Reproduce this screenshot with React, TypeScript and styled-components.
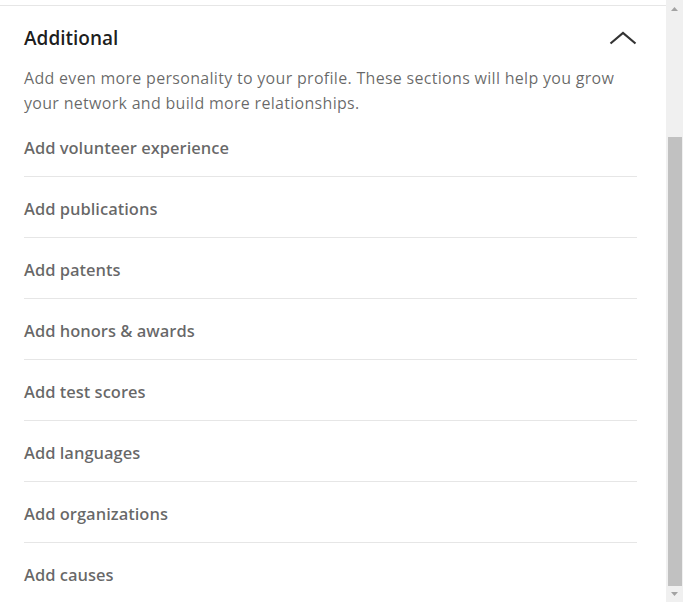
import { createGlobalStyle } from 'styled-components'
import styled from 'styled-components'

const GlobalStyle = createGlobalStyle`
  html, body {
    margin: 0;
    padding: 0;
    background: #ffffff;
    overflow: hidden;
  }
  body {
    font-family: "Open Sans", "Noto Sans", "Liberation Sans", sans-serif;
  }
`

const StyledPage = styled.div`
  display: flex;
  height: 602px;
  width: 683px;
  overflow: hidden;
`

const StyledContent = styled.div`
  flex: 1;
  display: flex;
  flex-direction: column;
  padding-top: 5px;
  min-width: 0;
`

const StyledSection = styled.section`
  border-top: 1px solid #e6e6e6;
  padding: 18px 29px 0 24px;
`

const StyledHeader = styled.div`
  display: flex;
  align-items: center;
  justify-content: space-between;
  height: 28px;
  margin-bottom: 14px;
`

const StyledTitle = styled.h2`
  margin: 0;
  font-size: 19px;
  font-weight: 600;
  line-height: 28px;
  color: rgba(0, 0, 0, 0.9);
`

const StyledToggle = styled.button`
  display: flex;
  align-items: center;
  justify-content: center;
  width: 32px;
  height: 28px;
  margin-right: -2px;
  padding: 0;
  border: none;
  background: none;
  cursor: pointer;
`

const StyledDescription = styled.p`
  margin: 0;
  max-width: 600px;
  font-size: 16px;
  letter-spacing: 0.3px;
  line-height: 25px;
  color: rgba(0, 0, 0, 0.6);
`

const StyledList = styled.ul`
  list-style: none;
  margin: 0;
  padding: 0;
`

const StyledItem = styled.li<{ $last?: boolean }>`
  display: flex;
  align-items: center;
  height: 61px;
  box-sizing: border-box;
  padding-top: 2px;
  border-bottom: ${(props) => (props.$last ? 'none' : '1px solid #e6e6e6')};
  font-size: 16.5px;
  font-weight: 600;
  color: rgba(0, 0, 0, 0.6);
  cursor: pointer;
`

const StyledRail = styled.div`
  width: 17px;
  flex: none;
  display: flex;
  flex-direction: column;
  background: #f0f0f0;
`

const StyledArrow = styled.div`
  height: 17px;
  flex: none;
  display: flex;
  align-items: center;
  justify-content: center;
`

const StyledTrack = styled.div`
  flex: 1;
  display: flex;
  flex-direction: column;
  padding: 0 1px 0 2px;
`

const StyledThumb = styled.div<{ $size: number }>`
  margin-top: auto;
  height: ${(props) => props.$size}px;
  background: #c1c1c1;
  margin-bottom: -1px;
`

const items = [
  'Add volunteer experience',
  'Add publications',
  'Add patents',
  'Add honors & awards',
  'Add test scores',
  'Add languages',
  'Add organizations',
  'Add causes',
]

function ChevronUp() {
  return (
    <svg width="28" height="14" viewBox="0 0 28 14" fill="none">
      <path d="M1.5 12.5 L14 2 L26.5 12.5" stroke="#333333" strokeWidth="2.2" />
    </svg>
  )
}

function Scrollbar() {
  return (
    <StyledRail>
      <StyledArrow>
        <svg width="7" height="4" viewBox="0 0 7 4">
          <path d="M0 4 L3.5 0 L7 4 Z" fill="#a3a3a3" />
        </svg>
      </StyledArrow>
      <StyledTrack>
        <StyledThumb $size={449} />
      </StyledTrack>
      <StyledArrow>
        <svg width="7" height="4" viewBox="0 0 7 4">
          <path d="M0 0 L7 0 L3.5 4 Z" fill="#a3a3a3" />
        </svg>
      </StyledArrow>
    </StyledRail>
  )
}

export default function App() {
  return (
    <>
      <GlobalStyle />
      <StyledPage>
        <StyledContent>
          <StyledSection>
            <StyledHeader>
              <StyledTitle>Additional</StyledTitle>
              <StyledToggle aria-label="Collapse">
                <ChevronUp />
              </StyledToggle>
            </StyledHeader>
            <StyledDescription>
              Add even more personality to your profile. These sections will help you grow
              your network and build more relationships.
            </StyledDescription>
            <StyledList>
              {items.map((item, i) => (
                <StyledItem key={item} $last={i === items.length - 1}>
                  {item}
                </StyledItem>
              ))}
            </StyledList>
          </StyledSection>
        </StyledContent>
        <Scrollbar />
      </StyledPage>
    </>
  )
}
